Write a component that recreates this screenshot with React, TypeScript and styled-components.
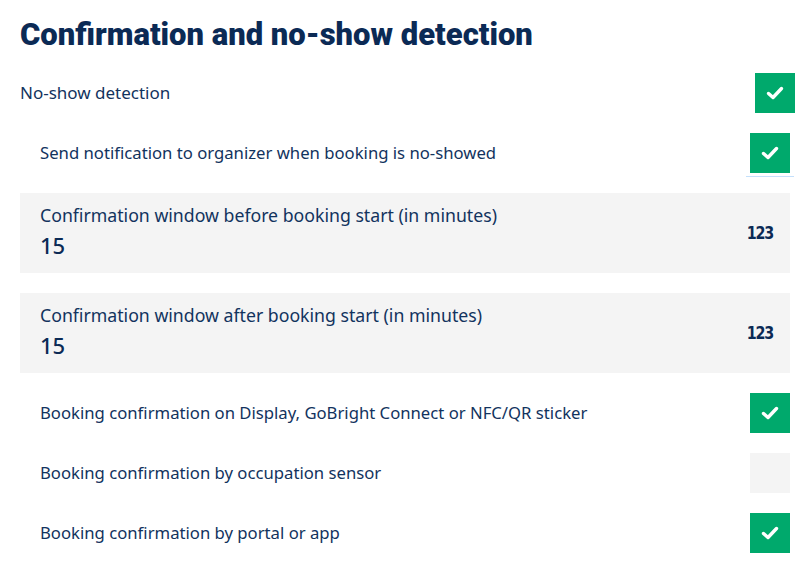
import React from "react";
import styled, { createGlobalStyle } from "styled-components";

const GlobalStyle = createGlobalStyle`
  body {
    margin: 0;
    background: #ffffff;
    font-family: "Noto Sans", "Open Sans", sans-serif;
    color: #12335e;
  }
`;

const Page = styled.div`
  padding: 13px 7px 0 20px;
`;

const Title = styled.h1`
  margin: 2px 0 18px;
  font-family: Roboto, "Liberation Sans", sans-serif;
  font-weight: 900;
  font-size: 31px;
  line-height: 40px;
  letter-spacing: 0;
  color: #0b2a55;
`;

const List = styled.div`
  display: flex;
  flex-direction: column;
  gap: 20px;
`;

const Nested = styled.div`
  display: flex;
  flex-direction: column;
  gap: 20px;
  margin-right: 5px;
`;

const Row = styled.div<{ $indent?: boolean }>`
  display: flex;
  align-items: center;
  justify-content: space-between;
  height: 40px;
  padding-left: ${(p) => (p.$indent ? "20px" : "0")};
`;

const Label = styled.span<{ $size?: number }>`
  font-size: ${(p) => p.$size ?? 16.7}px;
  line-height: 24px;
  color: #12335e;
`;

const Box = styled.div<{ $checked: boolean; $focused?: boolean }>`
  position: relative;
  width: 40px;
  height: 40px;
  display: flex;
  align-items: center;
  justify-content: center;
  background: ${(p) => (p.$checked ? "#00a96c" : "#f4f4f4")};

  &::after {
    content: "";
    display: ${(p) => (p.$focused ? "block" : "none")};
    position: absolute;
    left: -4px;
    right: -4px;
    bottom: -4px;
    height: 1px;
    background: #c4e0fb;
  }
`;

const Field = styled.div`
  display: flex;
  align-items: center;
  justify-content: space-between;
  height: 80px;
  box-sizing: border-box;
  padding: 0 17px 0 20px;
  background: #f4f4f4;
`;

const FieldText = styled.div`
  align-self: flex-start;
  display: flex;
  flex-direction: column;
  gap: 4px;
  padding-top: 10px;
`;

const FieldValue = styled.span`
  font-size: 22px;
  font-weight: 500;
  color: #0b2a55;
  line-height: 28px;
`;

const NumIcon = styled.span`
  display: inline-block;
  font-family: "DejaVu Sans", sans-serif;
  font-weight: 900;
  font-size: 17.5px;
  letter-spacing: -1.5px;
  color: #0b2a55;
  transform: scaleX(0.82);
  transform-origin: right center;
`;

const Check = () => (
  <svg width="18" height="16" viewBox="0 0 18 16">
    <polyline
      points="2.5,8.5 7,12.5 15.5,3.5"
      fill="none"
      stroke="#ffffff"
      strokeWidth="3.4"
      strokeLinecap="round"
      strokeLinejoin="round"
    />
  </svg>
);

const Checkbox = ({ checked, focused }: { checked: boolean; focused?: boolean }) => (
  <Box $checked={checked} $focused={focused}>
    {checked && <Check />}
  </Box>
);

const toggles = [
  { label: "Booking confirmation on Display, GoBright Connect or NFC/QR sticker", checked: true },
  { label: "Booking confirmation by occupation sensor", checked: false },
  { label: "Booking confirmation by portal or app", checked: true },
];

const fields = [
  { label: "Confirmation window before booking start (in minutes)", value: "15" },
  { label: "Confirmation window after booking start (in minutes)", value: "15" },
];

export default function App() {
  return (
    <Page>
      <GlobalStyle />
      <Title>Confirmation and no-show detection</Title>
      <List>
        <Row>
          <Label $size={17}>No-show detection</Label>
          <Checkbox checked />
        </Row>
        <Nested>
          <Row $indent>
            <Label>Send notification to organizer when booking is no-showed</Label>
            <Checkbox checked focused />
          </Row>
          {fields.map((f) => (
            <Field key={f.label}>
              <FieldText>
                <Label $size={17.7}>{f.label}</Label>
                <FieldValue>{f.value}</FieldValue>
              </FieldText>
              <NumIcon>123</NumIcon>
            </Field>
          ))}
          {toggles.map((t) => (
            <Row $indent key={t.label}>
              <Label>{t.label}</Label>
              <Checkbox checked={t.checked} />
            </Row>
          ))}
        </Nested>
      </List>
    </Page>
  );
}
